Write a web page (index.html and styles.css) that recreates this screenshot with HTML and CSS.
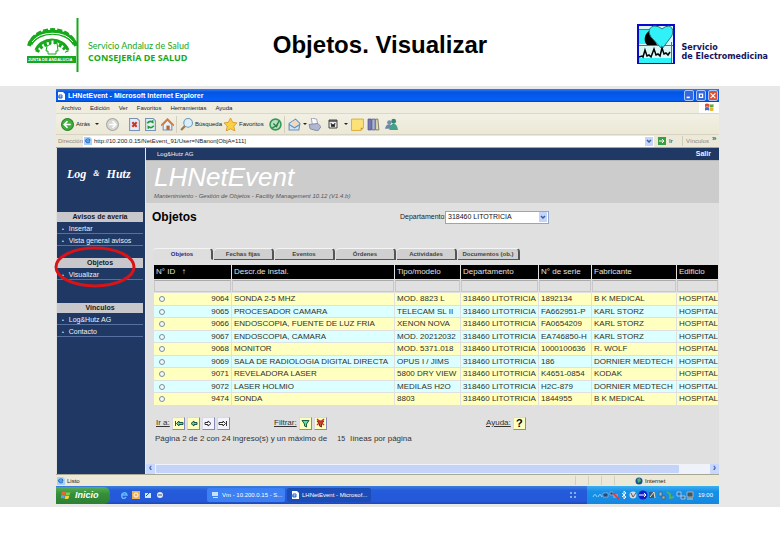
FILE: index.html
```html
<!DOCTYPE html>
<html lang="es">
<head>
<meta charset="utf-8">
<title>Objetos. Visualizar</title>
<link rel="stylesheet" href="styles.css">
</head>
<body>
<header class="slide-header">
  <div class="brand">
    <svg class="junta" viewBox="0 0 52 54" aria-hidden="true">
      <path d="M50.500 0v54" stroke="#17a81c" stroke-width="2"/>
      <g fill="none" stroke="#17a81c">
        <path d="M2 28A24 20 0 0 1 49 28" stroke-width="4" stroke-dasharray="5 2"/>
        <path d="M3 26A24 18 0 0 1 48 26" stroke-width="5"/>
        <path d="M9 32A17 15 0 0 1 41 32" stroke-width="3"/>
        <path d="M10 34A16 13 0 0 1 40 34" stroke-width="4" stroke-dasharray="3 2"/>
        <path d="M5 24A23 16 0 0 1 46 24" stroke="#fff" stroke-width="1"/>
        <path d="M24 22h3v4l3-1 1 8h-2v3h-8v-3h-2l1-5 4-2z" fill="#fff" stroke-width="1"/>
      </g>
      <path d="M0 38h49v7H0z" fill="#17a81c"/>
      <text class="junta-name" x="1" y="43">JUNTA DE ANDALUCIA</text>
    </svg>
    <div class="brand-text"><span>Servicio Andaluz de Salud</span><strong>CONSEJERÍA DE SALUD</strong></div>
  </div>
  <h1>Objetos. Visualizar</h1>
  <div class="service">
    <svg class="heart" viewBox="0 0 38 40" aria-hidden="true">
      <path d="M0 0h38v40H0z" fill="#0a0ac8"/>
      <path d="M2 2h34v37H2z" fill="#d8f8f8"/>
      <path d="M2 6h10v14H2zM2 34h32v5H2z" fill="#30f0f8"/>
      <path d="M2 5.500h12M2 21.500h34M34.500 18v21" stroke="#507878" stroke-width="1"/>
      <path d="M14 6C7 9 6 17 10 21h10z" fill="#000"/>
      <path d="M25 25L14 13C10 7 13 2 18 2q4 0 7 3 3-3 7-3c4 1 5 7 2 11z" fill="#30f0f8" stroke="#287078" stroke-width="1"/>
      <path d="M2 33l3-1 1 1 2-7 2 6 2-1 2 2 3-8 2 6 2-1 2 2 2-8 2 6 2-1 2 2 2-3" fill="none" stroke="#000" stroke-width="1.500"/>
    </svg>
    <div class="service-text">Servicio<br>de Electromedicina</div>
  </div>
</header>

<main class="stage">
<div class="window">
  <div class="titlebar">
    <svg class="i8" viewBox="0 0 8 8"><path d="M1 0h5l2 2v6H1z" fill="#fff"/><path d="M0 5h5M2 3h3v3H2z" fill="none" stroke="#2468d0"/></svg>
    <span class="window-title">LHNetEvent - Microsoft Internet Explorer</span>
    <button class="cap" aria-label="Minimizar"><svg viewBox="0 0 10 11"><path d="M2 8h4" stroke="#fff" stroke-width="2"/></svg></button>
    <button class="cap" aria-label="Maximizar"><svg viewBox="0 0 10 11"><path d="M3 4h4v4H3z" fill="none" stroke="#fff" stroke-width="1.500"/></svg></button>
    <button class="cap close" aria-label="Cerrar"><svg viewBox="0 0 10 11"><path d="M2 3l6 6M8 3L2 9" stroke="#fff" stroke-width="1.500"/></svg></button>
  </div>
  <nav class="menubar">
    <button>Archivo</button><button>Edición</button><button>Ver</button><button>Favoritos</button><button>Herramientas</button><button>Ayuda</button>
    <span class="flag"><svg class="i10" viewBox="0 0 10 10"><path d="M1 2q2-1 4 0v3q-2-1-4 0z" fill="#e05030"/><path d="M5.500 2q2 1 4 0v3q-2 1-4 0z" fill="#60a840"/><path d="M1 5.500q2-1 4 0v3q-2-1-4 0z" fill="#4070c8"/><path d="M5.500 5.500q2 1 4 0v3q-2 1-4 0z" fill="#e8b830"/></svg></span>
  </nav>
  <div class="toolbar">
    <button><svg class="i12" viewBox="0 0 12 12"><circle cx="6" cy="6" r="5.500" fill="#3fae3c" stroke="#2c8430"/><path d="M9 6H4M6 3L3 6l3 3" fill="none" stroke="#fff" stroke-width="1.500"/></svg><span>Atrás</span><i class="tri"></i></button>
    <button class="mid" aria-label="Adelante"><svg class="i12" viewBox="0 0 12 12"><circle cx="6" cy="6" r="5.500" fill="#d8d8d4" stroke="#a8a8a4"/><path d="M3 6h5M6 3l3 3-3 3" fill="none" stroke="#fff" stroke-width="1.500"/></svg></button>
    <button class="mid" aria-label="Detener"><svg class="i12" viewBox="0 0 12 12"><path d="M1.500.5h7l2 2v9h-9z" fill="#e4ecf8" stroke="#7890b8"/><path d="M4 4l4 4M8 4L4 8" stroke="#d83020" stroke-width="2"/></svg></button>
    <button class="mid" aria-label="Actualizar"><svg class="i12" viewBox="0 0 12 12"><path d="M1.500.5h7l2 2v9h-9z" fill="#e4f0f0" stroke="#7890b8"/><path d="M3 5q2-3 5-1V2M9 7q-2 3-5 1v2" fill="none" stroke="#209838" stroke-width="1.500"/></svg></button>
    <button class="mid" aria-label="Inicio"><svg class="i12" viewBox="0 0 12 12"><path d="M2 6v5h8V6L6 2z" fill="#e8f0fc" stroke="#7890b8"/><path d="M0 7l6-6 6 6" fill="none" stroke="#d87840" stroke-width="1.500"/><path d="M5 7h3v4H5z" fill="#b06830"/></svg></button>
    <i class="sep"></i>
    <button><svg class="i12" viewBox="0 0 12 12"><circle cx="7.500" cy="4.500" r="4" fill="#d8f0fc" stroke="#7098b8"/><path d="M4.500 7.500L1 11" stroke="#a07850" stroke-width="2"/></svg><span>Búsqueda</span></button>
    <button><svg class="i12" viewBox="0 0 12 12"><path d="M6 0l2 4 4 .5-3 3 1 4.500-4-2-4 2 1-4.500-3-3L4 4z" fill="#fcd040" stroke="#d09020" stroke-width=".7"/></svg><span>Favoritos</span></button>
    <button class="mid" aria-label="Historial"><svg class="i12" viewBox="0 0 12 12"><circle cx="6" cy="6" r="5" fill="#b8e0c0" stroke="#389858" stroke-width="1.500"/><path d="M4 5l3 3 2-5M3 9q4-1 5-4" fill="none" stroke="#288048" stroke-width="1.200"/></svg></button>
    <i class="sep"></i>
    <button aria-label="Correo"><svg class="i12" viewBox="0 0 12 12"><path d="M1 5l6-4 4 4-1 6H1z" fill="#d0e4f8" stroke="#6890b8"/><path d="M3 4l4-2 3 3-4 3z" fill="#f8d8b0"/><path d="M1 6l5 3 5-3" fill="none" stroke="#6890b8"/></svg><i class="tri"></i></button>
    <button class="mid" aria-label="Imprimir"><svg class="i12" viewBox="0 0 12 12"><path d="M3 0l5 1 1 5H4z" fill="#f8f8ff" stroke="#8890b0" stroke-width=".7"/><path d="M1 6l8-1 3 3-3 4-7-2z" fill="#b0b8d0" stroke="#707898" stroke-width=".7"/></svg></button>
    <button class="edit" aria-label="Modificar con Word"><svg class="i10" viewBox="0 0 10 10"><path d="M1 1h8v8H1z" fill="#eee" stroke="#444"/><path d="M1 2h8" stroke="#444" stroke-width="1.500"/><path d="M3 4l1 4 1-3 1 3 1-4" fill="none" stroke="#222"/></svg><i class="tri"></i></button>
    <button class="mid" aria-label="Nota"><svg class="i12" viewBox="0 0 12 12"><path d="M.5 1h11v8l-2 2.500h-9z" fill="#fce078" stroke="#d8a830" stroke-width=".8"/><path d="M9 11V9h2.500z" fill="#c89020"/></svg></button>
    <button class="mid" aria-label="Referencia"><svg class="i12" viewBox="0 0 12 12"><path d="M1 1h3v10H1z" fill="#7878b8" stroke="#484880" stroke-width=".7"/><path d="M4.500 1h3v10h-3z" fill="#a8b8d8" stroke="#505880" stroke-width=".7"/><path d="M8 1h2l1 10H8z" fill="#e8e0b0" stroke="#606058" stroke-width=".7"/></svg></button>
    <button class="mid" aria-label="Messenger"><svg class="i12" viewBox="0 0 12 12"><circle cx="4" cy="4" r="2" fill="#7090a8"/><path d="M0 10q1-5 5-4l2 4z" fill="#6888b0"/><circle cx="8" cy="3" r="2.200" fill="#388878"/><path d="M4 11q1-6 4-6t4 6z" fill="#48a088"/></svg></button>
  </div>
  <div class="address">
    <label for="url">Dirección</label>
    <div class="url-box">
      <svg class="i8" viewBox="0 0 8 8"><path d="M0 0h6l2 2v6H0z" fill="#a8d0f8"/><path d="M2 4h4M6 5q-2 2-4 0t1-3 3 2" fill="none" stroke="#1c68c8"/></svg>
      <input id="url" value="http://10.200.0.15/NetEvent_91/User=NBanon[ObjA=111]">
      <button class="drop" aria-label="Historial de direcciones"><svg viewBox="0 0 8 8"><path d="M2 3l2 2 2-2" fill="none" stroke="#3c5c98" stroke-width="1.500"/></svg></button>
    </div>
    <button class="go"><svg class="i8" viewBox="0 0 8 8"><path d="M0 0h8v8H0z" fill="#38a040"/><path d="M1 4h5M4 2l2 2-2 2" fill="none" stroke="#fff"/></svg>Ir</button>
    <span class="links">Vínculos</span><span class="more">»</span>
  </div>

  <div class="page">
    <aside class="sidebar">
      <div class="logo"><span>Log</span><small>&amp;</small><span>Hutz</span></div>
      <section><h3>Avisos de avería</h3><ul><li><a href="#">Insertar</a></li><li><a href="#">Vista general avisos</a></li></ul></section>
      <section class="current"><h3>Objetos</h3><ul><li><a href="#">Visualizar</a></li></ul>
        <svg class="ring" viewBox="0 0 82 42" aria-hidden="true"><ellipse cx="41" cy="21" rx="39" ry="19" fill="none" stroke="#d81418" stroke-width="3"/></svg></section>
      <section><h3>Vínculos</h3><ul><li><a href="#">Log&amp;Hutz AG</a></li><li><a href="#">Contacto</a></li></ul></section>
    </aside>
    <div class="content">
      <div class="topline"><span>Log&amp;Hutz AG</span><a href="#">Salir</a></div>
      <div class="banner"><div class="product">LHNetEvent</div><div class="crumbs">Mantenimiento - Gestión de Objetos - Facility Management 10.12 (V1.4.b)</div></div>
      <div class="body">
        <div class="heading">
          <h2>Objetos</h2>
          <label for="dept">Departamento:</label>
          <div class="select"><select id="dept"><option>318460 LITOTRICIA</option></select><svg viewBox="0 0 8 10" aria-hidden="true"><path d="M0 0h8v10H0z" fill="#c4d4fc"/><path d="M2 4l2 2 2-2" fill="none" stroke="#3c5c98" stroke-width="1.500"/></svg></div>
        </div>
        <div class="tabs">
          <button class="active">Objetos</button><button>Fechas fijas</button><button>Eventos</button><button>Órdenes</button><button>Actividades</button><button>Documentos (ob.)</button>
        </div>
        <table>
          <colgroup><col class="c-id"><col class="c-desc"><col class="c-type"><col class="c-dept"><col class="c-serial"><col class="c-maker"><col></colgroup>
          <thead>
            <tr><th>N° ID &nbsp; ↑</th><th>Descr.de instal.</th><th>Tipo/modelo</th><th>Departamento</th><th>N° de serie</th><th>Fabricante</th><th>Edificio</th></tr>
            <tr class="filter"><td></td><td></td><td></td><td></td><td></td><td></td><td></td></tr>
          </thead>
          <tbody>
            <tr><td><label><input type="radio" name="row">9064</label></td><td>SONDA 2-5 MHZ</td><td>MOD. 8823 L</td><td>318460 LITOTRICIA</td><td>1892134</td><td>B K MEDICAL</td><td>HOSPITAL</td></tr>
            <tr><td><label><input type="radio" name="row">9065</label></td><td>PROCESADOR CAMARA</td><td>TELECAM SL II</td><td>318460 LITOTRICIA</td><td>FA662951-P</td><td>KARL STORZ</td><td>HOSPITAL</td></tr>
            <tr><td><label><input type="radio" name="row">9066</label></td><td>ENDOSCOPIA, FUENTE DE LUZ FRIA</td><td>XENON NOVA</td><td>318460 LITOTRICIA</td><td>FA0654209</td><td>KARL STORZ</td><td>HOSPITAL</td></tr>
            <tr><td><label><input type="radio" name="row">9067</label></td><td>ENDOSCOPIA, CAMARA</td><td>MOD. 20212032</td><td>318460 LITOTRICIA</td><td>EA746850-H</td><td>KARL STORZ</td><td>HOSPITAL</td></tr>
            <tr><td><label><input type="radio" name="row">9068</label></td><td>MONITOR</td><td>MOD. 5371.018</td><td>318460 LITOTRICIA</td><td>1000100636</td><td>R. WOLF</td><td>HOSPITAL</td></tr>
            <tr><td><label><input type="radio" name="row">9069</label></td><td>SALA DE RADIOLOGIA DIGITAL DIRECTA</td><td>OPUS I / JIMS</td><td>318460 LITOTRICIA</td><td>186</td><td>DORNIER MEDTECH</td><td>HOSPITAL</td></tr>
            <tr><td><label><input type="radio" name="row">9071</label></td><td>REVELADORA LASER</td><td>5800 DRY VIEW</td><td>318460 LITOTRICIA</td><td>K4651-0854</td><td>KODAK</td><td>HOSPITAL</td></tr>
            <tr><td><label><input type="radio" name="row">9072</label></td><td>LASER HOLMIO</td><td>MEDILAS H2O</td><td>318460 LITOTRICIA</td><td>H2C-879</td><td>DORNIER MEDTECH</td><td>HOSPITAL</td></tr>
            <tr><td><label><input type="radio" name="row">9474</label></td><td>SONDA</td><td>8803</td><td>318460 LITOTRICIA</td><td>1844955</td><td>B K MEDICAL</td><td>HOSPITAL</td></tr>
          </tbody>
        </table>
        <div class="actions">
          <div class="group"><a href="#">Ir a:</a>
            <button aria-label="Primera"><svg viewBox="0 0 11 11"><path d="M2.500 3v5M10 4.500H6V3L3.500 5.500 6 8V6.500h4z" fill="#70c8b0" stroke="#185848"/></svg></button>
            <button aria-label="Anterior"><svg viewBox="0 0 11 11"><path d="M9 4.500H6V3L3 5.500 6 8V6.500h3z" fill="#70c8b0" stroke="#185848"/></svg></button>
            <button class="off" aria-label="Siguiente"><svg viewBox="0 0 11 11"><path d="M2 4.500h3V3l3 2.500L5 8V6.500H2z" fill="#fff" stroke="#333"/></svg></button>
            <button class="off" aria-label="Última"><svg viewBox="0 0 11 11"><path d="M8.500 3v5M1 4.500h4V3l2.500 2.500L5 8V6.500H1z" fill="#fff" stroke="#333"/></svg></button>
          </div>
          <div class="group"><a href="#">Filtrar:</a>
            <button aria-label="Filtrar"><svg viewBox="0 0 11 11"><path d="M2 2.500h7L6.500 6v3l-2-1V6z" fill="#60d8a8" stroke="#186048"/></svg></button>
            <button aria-label="Quitar filtro"><svg viewBox="0 0 11 11"><path d="M2 3h7L6.500 6v3l-2-1V6z" fill="#a06838" stroke="#703020"/><path d="M2 1l7 6M9 1L2 7" stroke="#e02828" stroke-width="1.500"/></svg></button>
          </div>
          <div class="group"><a href="#">Ayuda:</a><button class="help">?</button></div>
        </div>
        <p class="pager">Página 2 de 2 con 24 ingreso(s) y un máximo de <b>15</b> líneas por página</p>
      </div>
      <div class="scroll"><span>‹</span><div class="track"><div class="thumb"></div></div><span>›</span></div>
    </div>
  </div>

  <div class="status">
    <span class="ready"><svg class="i8" viewBox="0 0 8 8"><path d="M0 0h6l2 2v6H0z" fill="#a8d0f8"/><path d="M2 4h4M6 5q-2 2-4 0t1-3 3 2" fill="none" stroke="#1c68c8"/></svg>Listo</span>
    <i></i><i></i><i></i><i></i>
    <span class="zone"><svg class="i8" viewBox="0 0 8 8"><circle cx="4" cy="4" r="3.500" fill="#1c4c98"/><path d="M2 2l3-1 1 3-3 2z" fill="#48b068"/></svg>Internet</span>
  </div>
  <footer class="taskbar">
    <button class="start"><svg class="i10" viewBox="0 0 10 10"><path d="M1 2q2-1 4 0L4 5q-2-1-4 0z" fill="#f06838"/><path d="M5.500 2q2 1 4 0l-1 3q-2 1-4 0z" fill="#80d048"/><path d="M0 5.500q2-1 4 0l-1 3q-2-1-3 0z" fill="#60a0f8"/><path d="M4.500 5.500q2 1 4 0l-1 3q-2 1-4 0z" fill="#f8d040"/></svg>Inicio</button>
    <div class="quick">
      <svg class="i8" viewBox="0 0 8 8"><path d="M1 4h6Q6 1 3.500 2T2 6t4 0" fill="none" stroke="#60b8f8" stroke-width="1.500"/></svg>
      <svg class="i8" viewBox="0 0 8 8"><path d="M0 0h8v8H0z" fill="#f0b058"/><circle cx="4" cy="4" r="2" fill="none" stroke="#fff"/></svg>
      <svg class="i8" viewBox="0 0 8 8"><path d="M1 2h6v5H1z" fill="#c8e8fc"/><path d="M2 5l4-4" stroke="#2858a8"/></svg>
      <svg class="i8" viewBox="0 0 8 8"><circle cx="4" cy="4" r="3" fill="#e0e8f0"/><path d="M2 4h4" stroke="#405888"/></svg>
    </div>
    <button class="task"><svg class="i8" viewBox="0 0 8 8"><path d="M1 1h6v4H1zM2 6h5v1H2z" fill="#c8e0fc"/></svg>Vm - 10.200.0.15 - S...</button>
    <button class="task pressed"><svg class="i8" viewBox="0 0 8 8"><path d="M1 0h5l2 2v6H1z" fill="#fff"/><path d="M0 5h5M2 3h3v3H2z" fill="none" stroke="#2468d0"/></svg>LHNetEvent - Microsof...</button>
    <svg class="lang i8" viewBox="0 0 8 8"><path d="M1 1h2v2H1zM5 1h2v2H5zM1 5h2v2H1zM5 5h2v2H5z" fill="#80b0fc"/></svg>
    <div class="tray">
      <svg viewBox="0 0 102 10" aria-hidden="true">
        <path d="M1 7q2-5 4 0M6 7q2-5 4 0" fill="none" stroke="#90d0fc"/>
        <path d="M11 3h5v4h-5zM18 2h3v3h-3z" fill="#284878" stroke="#a8c8e8" stroke-width=".6"/>
        <path d="M21 4h5v4h-5z" fill="#b08898"/><path d="M21 3l6 6" stroke="#d83848" stroke-width="1.500"/>
        <path d="M30 3l4 4-2 2V1l2 2-4 4" fill="none" stroke="#fff" stroke-width=".9"/>
        <circle cx="41" cy="5" r="3.500" fill="#d8d8d8"/><path d="M39 3l2 4 3-4" fill="none" stroke="#506070"/>
        <circle cx="51" cy="5" r="4.500" fill="#1020c8"/><path d="M47 5h7M52 3l2 2-2 2" fill="none" stroke="#fff"/>
        <path d="M57 2h6v6h-6z" fill="#405878"/><path d="M58 7l4-5 1 6" fill="none" stroke="#e0e8d8"/>
        <path d="M67 2h3v4h-3zM70 6h3v3h-3z" fill="#98b0c0" stroke="#385868" stroke-width=".6"/>
        <path d="M75 2l3 2v4l4-1" fill="none" stroke="#50b060" stroke-width="2"/>
        <path d="M85 2h4v4h-4zM89 6h4v3h-4z" fill="#3070b0" stroke="#c8e0f0" stroke-width=".7"/>
        <path d="M95 2h6v5h-6z" fill="#405868" stroke="#c8d0c8" stroke-width=".7"/><path d="M95 9h6" stroke="#d0c8a0"/>
      </svg><time>19:00</time>
    </div>
  </footer>
</div>
</main>
</body>
</html>
```
FILE: styles.css
```css
* { box-sizing: border-box; }
body { margin: 0; background: #fff; color: #222; font-family: "Liberation Sans", Arial, sans-serif; font-size: 8px; line-height: 10px; }
button, input, select { margin: 0; padding: 0; border: 0; background: none; color: inherit; font: inherit; }
a { color: inherit; text-decoration: none; }
h1, h2, h3, p, ul { margin: 0; padding: 0; }
ul { list-style: none; }
svg { display: block; flex: none; }
.i8 { width: 8px; height: 8px; }
.i10 { width: 10px; height: 10px; }
.i12 { width: 13px; height: 13px; }

.slide-header { display: grid; grid-template-columns: minmax(0, 7fr) auto minmax(0, 8fr); height: 86px; padding: 0 12px 0 27px; }
.brand { display: flex; gap: 9px; padding-top: 18px; color: #17a81c; }
.junta { width: 52px; height: 54px; }
.junta-name { fill: #fff; font-size: 4px; font-weight: bold; }
.brand-text { display: flex; flex-direction: column; padding-top: 22px; font-family: "Open Sans", sans-serif; font-size: 9px; line-height: 12px; white-space: nowrap; }
.brand-text span { font-family: Lato, sans-serif; }
h1 { padding-top: 31px; color: #000; font-size: 24px; line-height: 28px; }
.service { display: flex; justify-content: flex-end; gap: 7px; padding-top: 24px; color: #14145c; }
.heart { width: 38px; height: 40px; }
.service-text { padding-top: 19px; font-family: "DejaVu Sans", sans-serif; font-size: 8px; font-weight: bold; line-height: 9px; white-space: nowrap; }

.stage { padding: 3px 61px 3px 56px; background: #e8e8e8; }
.window { font-size: 7px; line-height: 10px; }
.titlebar { display: flex; align-items: center; gap: 2px; height: 13px; padding: 0 1px; background: linear-gradient(#2c80f4, #0454e0 25%, #0660fa 85%, #0340b0); color: #fff; font-weight: bold; }
.window-title { flex: 1; padding-left: 1px; }
.cap { width: 10px; height: 11px; border: 1px solid #a8c4f8; border-radius: 2px; background: #3468e0; }
.close { background: #e05030; }
.menubar { display: flex; align-items: center; gap: 9px; height: 12px; padding-left: 5px; border-bottom: 1px solid #dcd8c8; background: #efede0; font-size: 6px; }
.flag { display: flex; justify-content: center; width: 20px; height: 11px; margin-left: auto; background: #fff; }
.toolbar { display: grid; grid-template-columns: 38px 27px 16px 16px 18px 4px 44px 42px 18px 4px 18px 16px 27px 16px 16px 20px; align-items: center; height: 21px; padding-left: 5px; border-bottom: 1px solid #d8d4c4; background: linear-gradient(#f2f0e4, #ebe8d6); font-size: 6px; }
.toolbar button { display: flex; align-items: center; gap: 2px; }
.toolbar .mid { justify-content: center; }
.toolbar .edit { gap: 6px; padding-left: 6px; }
.tri { border: 2px solid transparent; border-top-color: #222; border-bottom: 0; }
.toolbar button span + .tri { margin-left: 3px; }
.sep { width: 1px; height: 17px; background: #d4d0c0; }
.address { display: flex; align-items: center; height: 13px; padding: 0 2px; border-bottom: 1px solid #a8a898; background: #ece9d8; font-size: 6px; }
.address label { width: 25px; color: #888; }
.url-box { display: flex; flex: 1; align-items: center; gap: 2px; height: 11px; padding: 1px; background: #fff; }
.url-box input { flex: 1; min-width: 0; height: 10px; }
.drop { width: 8px; height: 9px; background: #c4d4fc; }
.go { display: flex; align-items: center; gap: 3px; width: 28px; padding-left: 4px; }
.links { width: 30px; padding-left: 3px; border-left: 1px solid #d0ccbc; color: #888; }
.more { width: 5px; height: 10px; font-size: 8px; line-height: 6px; }

.page { display: grid; grid-template-columns: 89px minmax(0, 1fr); padding-left: 1px; background: #e0e0e0; }
.sidebar { display: flex; flex-direction: column; gap: 12px; background: #1f3864; border-right: 1px solid #e8e8e8; color: #f0f0f8; }
.logo { display: flex; align-items: center; gap: 7px; height: 52px; padding-left: 10px; color: #fff; font: italic bold 12px/18px "Liberation Serif", serif; }
.logo small { font-size: 8px; }
.sidebar section { position: relative; padding-right: 2px; }
.sidebar section + section { min-height: 33px; }
.sidebar h3 { height: 10px; background: #c8c8cc; color: #181818; font-size: 7px; line-height: 10px; text-align: center; }
.sidebar li { height: 12px; padding: 2px 0 0 5px; border-bottom: 1px solid #5870a0; line-height: 9px; white-space: nowrap; }
.sidebar li::before { content: "•"; margin-right: 5px; font-size: 5px; }
.ring { position: absolute; top: -12px; left: -3px; z-index: 2; width: 82px; height: 42px; }

.content { display: flex; flex-direction: column; height: 326px; overflow: hidden; }
.topline { display: flex; justify-content: space-between; align-items: center; height: 12px; padding: 0 8px 0 11px; background: #1f3864; color: #f0f0f8; font-size: 6px; }
.topline a { font-size: 7px; font-weight: bold; }
.banner { height: 43px; padding: 2px 8px; border-top: 1px solid #b8b8b8; background: #ccc; }
.product { color: #fff; font-size: 26px; font-style: italic; line-height: 28px; }
.crumbs { padding-top: 1px; color: #555; font-size: 6px; font-style: italic; line-height: 8px; }
.body { flex: 1; padding: 7px 0 0 6px; background: #e0e0e0; }
.heading { display: flex; align-items: center; height: 14px; }
.heading h2 { flex: 0 0 248px; color: #000; font-size: 12px; line-height: 14px; }
.heading label { width: 45px; }
.select { display: flex; align-items: center; width: 104px; height: 13px; padding: 1px; border: 1px solid #90a8c8; background: #fff; }
.select select { flex: 1; min-width: 0; padding-left: 1px; appearance: none; color: #111; font-size: 7px; line-height: 10px; }
.select svg { width: 8px; height: 10px; }
.tabs { display: flex; gap: 1px; height: 12px; margin-top: 24px; padding-left: 1px; }
.tabs button { width: 60px; border: solid #555; border-width: 1px 2px 1px 0; border-top-color: #f4f4f4; border-radius: 4px 4px 0 0; background: #d0d0d0; font-size: 6px; font-weight: bold; line-height: 9px; color: #444; }
.tabs button:last-child { width: 62px; }
.tabs .active { background: #dedede; border-bottom-color: #dedede; color: #28288c; }

table { width: calc(100% - 1px); margin: 4px 0 0 1px; border-spacing: 1px; table-layout: fixed; color: #303028; font-size: 8px; line-height: 10px; white-space: nowrap; }
.c-id { width: 77px; }
.c-desc { width: 162px; }
.c-type { width: 65px; }
.c-dept { width: 77px; }
.c-serial { width: 52px; }
.c-maker { width: 84px; }
th, td { padding: 0 2px; overflow: hidden; text-align: left; }
th { height: 14px; background: #000; color: #e0e0e0; font-weight: normal; }
.filter td { height: 12px; border: 1px solid #c8c8c8; border-top-color: #aaa; }
tbody td { height: 12px; background: #ffffc0; }
tbody tr:nth-child(even) td { height: 11px; background: #dcffff; }
tbody label { display: flex; justify-content: space-between; align-items: center; }
input[type="radio"] { appearance: none; width: 6px; height: 6px; margin-left: 3px; border: 1px solid #7890a0; border-radius: 50%; background: #f4f8f8; }

.actions { display: grid; grid-template-columns: 118px 212px 60px; height: 14px; margin-top: 10px; padding-left: 4px; color: #333; font-size: 8px; }
.group { display: flex; align-items: center; gap: 2px; }
.group a { text-decoration: underline; }
.group button { width: 13px; height: 13px; border: 1px solid #8888b8; border-top-color: #d8d8e8; border-left-color: #d8d8e8; background: #ffffc0; }
.group .off { background: #f4f4ff; }
.group .help { color: #000; font-size: 11px; font-weight: bold; line-height: 11px; }
.pager { padding: 4px 0 0 3px; color: #333; font-size: 8px; }
.pager b { margin: 0 3px 0 8px; font-size: 7px; font-weight: normal; }
.scroll { display: flex; height: 10px; background: #f0f2fa; color: #3858a0; font-size: 10px; font-weight: bold; line-height: 8px; }
.scroll span { width: 9px; background: #c8d8fc; text-align: center; }
.track { flex: 1; padding: 1px 31px 1px 1px; }
.thumb { height: 8px; border-radius: 1px; background: #c4d4f8; }

.status { display: flex; align-items: center; height: 12px; border-top: 1px solid #a8a898; background: #ece9d8; font-size: 6px; }
.status i { width: 13px; height: 9px; border-left: 1px solid #d4d0c0; }
.ready { display: flex; flex: 1; align-items: center; gap: 2px; padding-left: 1px; }
.zone { display: flex; align-items: center; gap: 2px; width: 92px; padding-left: 8px; }
.taskbar { display: flex; align-items: center; height: 18px; background: linear-gradient(#3c80dc, #245cdc 25%, #2458d8 85%, #1c48b0); color: #fff; }
.start { display: flex; align-items: center; gap: 4px; width: 54px; height: 17px; padding-left: 5px; border-radius: 0 6px 6px 0; background: linear-gradient(#58b058, #34903a 40%, #2c8034); font-size: 9px; font-style: italic; font-weight: bold; }
.quick { display: flex; gap: 4px; width: 97px; padding-left: 10px; }
.task { display: flex; align-items: center; gap: 3px; width: 78px; height: 14px; margin-right: 2px; padding-left: 4px; border-radius: 2px; background: #3c80f4; font-size: 6px; white-space: nowrap; }
.pressed { width: 84px; background: #1c4cb8; }
.lang { margin-left: auto; margin-right: 10px; }
.tray { display: flex; align-items: center; justify-content: space-between; width: 132px; height: 18px; padding: 0 6px 0 5px; background: linear-gradient(#3cb0f0, #1890e8 30%, #1488e0); font-size: 6px; }
.tray svg { width: 102px; height: 10px; }
```
